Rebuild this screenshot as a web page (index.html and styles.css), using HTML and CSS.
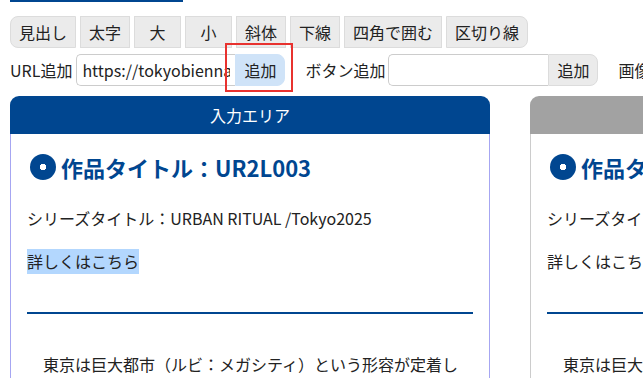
FILE: index.html
```html
<!DOCTYPE html>
<html lang="ja">
<head>
    <meta charset="UTF-8">
    <meta name="viewport" content="width=device-width, initial-scale=1.0">
    <title>作品ページ編集</title>
    <link rel="stylesheet" href="styles.css">
</head>
<body>
    <div id="page">
        <div class="top-line"></div>

        <!-- Formatting toolbar -->
        <div class="toolbar">
            <button class="tool">見出し</button>
            <button class="tool">太字</button>
            <button class="tool">大</button>
            <button class="tool">小</button>
            <button class="tool">斜体</button>
            <button class="tool">下線</button>
            <button class="tool">四角で囲む</button>
            <button class="tool">区切り線</button>
        </div>

        <div class="insert-row">
            <div class="insert-group">
                <label for="url-input">URL追加</label>
                <div class="input-pair">
                    <input type="text" id="url-input" value="https://tokyobiennale.jp/">
                    <button class="add-btn active">追加</button>
                    <span class="highlight-box"></span>
                </div>
            </div>
            <div class="insert-group">
                <label for="button-input">ボタン追加</label>
                <div class="input-pair">
                    <input type="text" id="button-input">
                    <button class="add-btn">追加</button>
                </div>
            </div>
            <div class="insert-group">
                <label>画像追加</label>
            </div>
        </div>

        <!-- Editor / preview panels -->
        <div class="panels">
            <div class="panel">
                <div class="panel-header">入力エリア</div>
                <div class="panel-body">
                    <h2><span class="dot-icon"></span>作品タイトル：UR2L003</h2>
                    <p class="series">シリーズタイトル：URBAN RITUAL /Tokyo2025</p>
                    <p class="more"><span class="selected">詳しくはこちら</span></p>
                    <hr>
                    <p class="text">東京は巨大都市（ルビ：メガシティ）という形容が定着しているが、その内側には無数の小さな儀式が息づいている。</p>
                </div>
            </div>
            <div class="panel preview">
                <div class="panel-header">プレビュー</div>
                <div class="panel-body">
                    <h2><span class="dot-icon"></span>作品タイトル：UR2L003</h2>
                    <p class="series">シリーズタイトル：URBAN RITUAL /Tokyo2025</p>
                    <p class="more"><span>詳しくはこちら</span></p>
                    <hr>
                    <p class="text">東京は巨大都市（ルビ：メガシティ）という形容が定着しているが、その内側には無数の小さな儀式が息づいている。</p>
                </div>
            </div>
        </div>
    </div>
</body>
</html>
```

FILE: styles.css
```css
body {
    font-family: "Noto Sans CJK JP", "Noto Sans", sans-serif;
    margin: 0;
    padding: 0;
    color: #222;
    background: white;
    overflow: hidden;
}

#page {
    padding: 0 10px;
    width: 1200px;
}

.top-line {
    width: 173px;
    height: 2px;
    background: #004690;
}

.toolbar {
    display: flex;
    gap: 4px;
    margin-top: 14px;
}

.tool {
    height: 32px;
    min-width: 47px;
    padding: 0 8px;
    background: #ebebeb;
    border: 1px solid #dcdcdc;
    border-radius: 0;
    font-family: inherit;
    font-size: 16px;
    line-height: 30px;
    color: #222;
    cursor: pointer;
}

.tool:first-child {
    border-radius: 8px 0 0 8px;
}

.tool:last-child {
    border-radius: 0 8px 8px 0;
}

.insert-row {
    display: flex;
    gap: 20px;
    margin-top: 6px;
}

.insert-group {
    display: flex;
    align-items: center;
    gap: 3px;
    font-size: 16px;
    white-space: nowrap;
}

.insert-group:first-child {
    gap: 4px;
}

.input-pair {
    display: flex;
    position: relative;
}

.input-pair input {
    width: 159px;
    height: 32px;
    box-sizing: border-box;
    border: 1px solid #cccccc;
    border-right: none;
    border-radius: 5px 0 0 5px;
    padding: 0 5px;
    font-family: inherit;
    font-size: 16px;
    color: #222;
}

#button-input {
    width: 160px;
}

.add-btn {
    width: 50px;
    height: 32px;
    background: #ebebeb;
    border: 1px solid #dcdcdc;
    border-radius: 0 8px 8px 0;
    font-family: inherit;
    font-size: 16px;
    color: #222;
    padding: 0;
}

.add-btn.active {
    background: #cfe3f8;
    border-color: #cfe3f8;
}

/* red annotation frame */
.highlight-box {
    position: absolute;
    left: 149px;
    top: -11px;
    width: 64px;
    height: 45px;
    border: 2px solid #e8322f;
}

.panels {
    display: flex;
    gap: 40px;
    margin-top: 10px;
}

.panel {
    width: 480px;
    flex: none;
}

.panel-header {
    height: 38px;
    line-height: 38px;
    background: #004690;
    color: white;
    text-align: center;
    font-size: 16px;
    border-radius: 9px 9px 0 0;
}

.panel-body {
    border: 1px solid #a6a6f2;
    border-top: none;
    padding: 15px 16px 40px;
}

.preview .panel-header {
    background: #a2a2a2;
}

.preview .panel-body {
    border-color: #cccccc;
}

h2 {
    display: flex;
    align-items: center;
    gap: 5px;
    margin: 0;
    font-size: 22px;
    line-height: 36px;
    font-weight: bold;
    color: #004690;
}

.dot-icon {
    width: 26px;
    height: 26px;
    margin-left: 3px;
    border-radius: 50%;
    background: radial-gradient(circle, white 0 3px, #004690 3.5px);
}

.series {
    margin: 20px 0 0;
    font-size: 16px;
    line-height: 26px;
}

.more {
    margin: 18px 0 0;
    font-size: 16px;
    line-height: 25px;
}

.more span {
    display: inline-block;
    line-height: 25px;
}

.more .selected {
    background: #b3d7fe;
}

hr {
    height: 2px;
    border: none;
    background: #004690;
    margin: 38px 0 0;
}

.text {
    margin: 34px 0 0;
    font-size: 16px;
    line-height: 32px;
    text-indent: 1em;
}
```
